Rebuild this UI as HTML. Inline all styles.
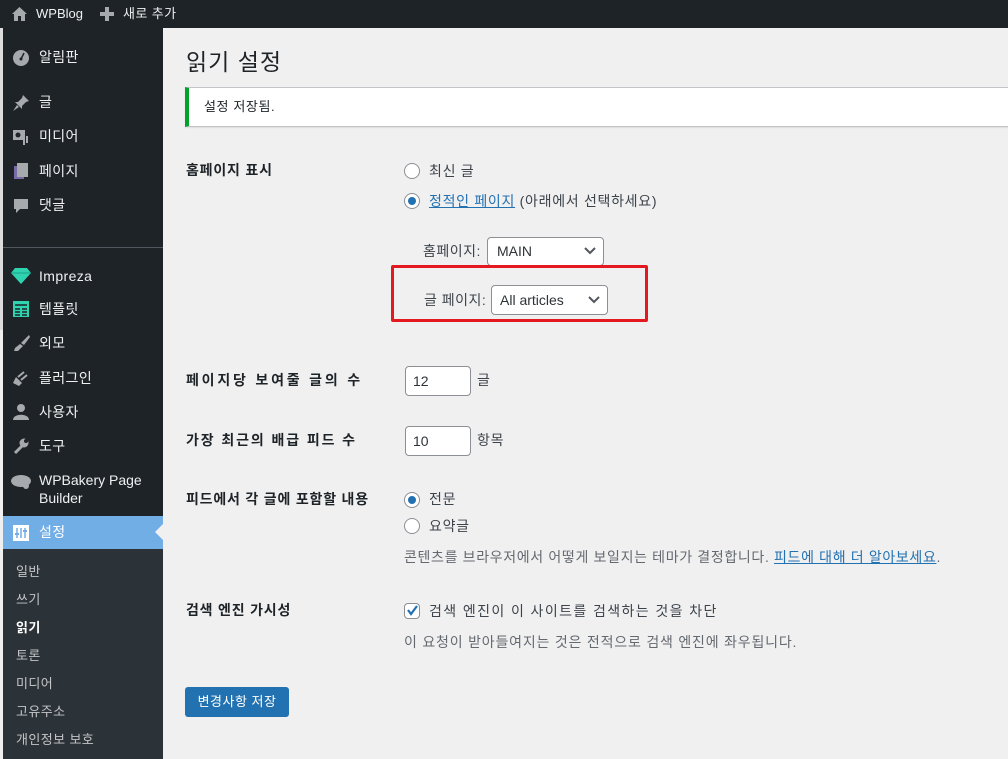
<!DOCTYPE html>
<html><head><meta charset="utf-8"><style>
*{margin:0;padding:0;box-sizing:border-box}
body{width:1008px;height:759px;overflow:hidden;background:#f0f0f1;font-family:"Liberation Sans","Noto Sans CJK KR",sans-serif;font-size:14px;color:#1d2327;position:relative}
.a{position:absolute;white-space:nowrap;line-height:20px}
#top{position:absolute;left:0;top:0;width:1008px;height:28px;background:#1d2327}
#side{position:absolute;left:3px;top:28px;width:160px;height:731px;background:#1d2327}
#strip{position:absolute;left:0;top:28px;width:3px;height:302px;background:#dcdcde}
.m{position:absolute;left:36px;color:#f0f0f1;line-height:20px;font-size:14px;letter-spacing:.4px}
.ic{position:absolute;left:9px;width:18px;height:18px}
.s{position:absolute;left:13px;color:#c3c4c7;font-size:13px;line-height:20px;letter-spacing:.4px}
.radio{position:absolute;width:16px;height:16px;border:1px solid #8c8f94;border-radius:50%;background:#fff}
.radio.on::after{content:"";position:absolute;left:3px;top:3px;width:8px;height:8px;border-radius:50%;background:#2271b1}
.box{position:absolute;background:#fff;border:1px solid #8c8f94;border-radius:4px}
.lbl{font-weight:600;font-size:14px}
</style></head><body>
<div id="top">
<svg style="position:absolute;left:11px;top:6px" width="17" height="16" viewBox="0 0 17 16"><path d="M8.5 1 L1 8 L3 8 L3 15 L7 15 L7 10 L10 10 L10 15 L14 15 L14 8 L16 8 Z" fill="#a7aaad"/></svg>
<div class="a" style="left:36px;top:4px;color:#f0f0f1;font-size:13px">WPBlog</div>
<svg style="position:absolute;left:100px;top:7px" width="14" height="14"><path d="M5 0h4v5h5v4h-5v5h-4v-5h-5v-4h5z" fill="#a7aaad"/></svg>
<div class="a" style="left:123px;top:4px;color:#f0f0f1;font-size:13px;letter-spacing:.4px">새로 추가</div>
</div>
<div id="strip"></div>
<div id="side">
<svg class="ic" style="top:20px" viewBox="0 0 18 18"><circle cx="9" cy="10" r="8" fill="#a7aaad"/><path d="M9 11 L12 5" stroke="#1d2327" stroke-width="1.5"/><circle cx="9" cy="11" r="1.5" fill="#1d2327"/></svg>
<div class="m" style="top:19px">알림판</div>
<svg class="ic" style="top:66px" viewBox="0 0 18 18"><path d="M11 1 L17 7 L14 8 L10 12 L10 15 L3 8 L6 8 L10 4 Z M5 11 L1 17 L7 13Z" fill="#a7aaad"/></svg>
<div class="m" style="top:64px">글</div>
<svg class="ic" style="top:100px" viewBox="0 0 18 18"><rect x="1" y="2" width="12" height="10" fill="#a7aaad"/><circle cx="6" cy="7" r="2.5" fill="#1d2327"/><path d="M12 9v8M15 8v7" stroke="#a7aaad" stroke-width="2"/></svg>
<div class="m" style="top:98px">미디어</div>
<svg class="ic" style="top:134px" viewBox="0 0 18 18"><rect x="2" y="4" width="10" height="13" fill="#7b6aa8"/><rect x="5" y="1" width="11" height="14" fill="#a7aaad"/></svg>
<div class="m" style="top:133px">페이지</div>
<svg class="ic" style="top:169px" viewBox="0 0 18 18"><path d="M2 2h14v10h-8l-4 4v-4h-2z" fill="#a7aaad"/></svg>
<div class="m" style="top:167px">댓글</div>
<div style="position:absolute;left:0;top:219px;width:160px;height:1px;background:#50575e"></div>
<svg class="ic" style="top:239px;width:22px;left:7px" viewBox="0 0 22 18"><path d="M1 6 L5 1 L17 1 L21 6 L11 17 Z" fill="#2fd3b0"/><path d="M1 6 H21" stroke="#1aa388"/></svg>
<div class="m" style="top:238px">Impreza</div>
<svg class="ic" style="top:272px" viewBox="0 0 18 18"><rect x="1" y="1" width="16" height="16" fill="#2fd3b0"/><path d="M3 5h12M3 9h5M10 9h5M3 12h5M10 12h5M3 15h5M10 15h5" stroke="#1d2327" stroke-width="1.5"/></svg>
<div class="m" style="top:271px">템플릿</div>
<svg class="ic" style="top:306px" viewBox="0 0 18 18"><path d="M17 1 L9 9 L12 11 L18 3Z M8 10 L11 12 L6 17 L2 17 L3 14Z" fill="#a7aaad"/></svg>
<div class="m" style="top:305px">외모</div>
<svg class="ic" style="top:341px" viewBox="0 0 18 18"><path d="M6 8 L12 3 M9 11 L15 6" stroke="#a7aaad" stroke-width="2"/><path d="M4 8 L10 14 L7 17 L1 14 Z" fill="#a7aaad"/></svg>
<div class="m" style="top:340px">플러그인</div>
<svg class="ic" style="top:375px" viewBox="0 0 18 18"><circle cx="9" cy="5" r="4" fill="#a7aaad"/><path d="M1 17 C1 10 17 10 17 17Z" fill="#a7aaad"/></svg>
<div class="m" style="top:374px">사용자</div>
<svg class="ic" style="top:409px" viewBox="0 0 18 18"><path d="M3 16 L10 9" stroke="#a7aaad" stroke-width="3"/><circle cx="12" cy="6" r="4.5" fill="#a7aaad"/><circle cx="14" cy="4" r="2" fill="#1d2327"/></svg>
<div class="m" style="top:408px">도구</div>
<svg class="ic" style="top:444px;width:22px;left:7px" viewBox="0 0 22 18"><ellipse cx="11" cy="9" rx="10" ry="6" fill="#a7aaad"/><circle cx="16" cy="14" r="3" fill="#a7aaad"/></svg>
<div class="m" style="top:443px;line-height:18px;letter-spacing:0">WPBakery Page<br>Builder</div>
<div style="position:absolute;left:0;top:488px;width:160px;height:33px;background:#72aee6"></div>
<div style="position:absolute;left:152px;top:496px;width:0;height:0;border-top:8px solid transparent;border-bottom:8px solid transparent;border-right:8px solid #f0f0f1"></div>
<svg class="ic" style="top:496px" viewBox="0 0 18 18"><rect x="1" y="1" width="16" height="16" fill="#fff"/><path d="M5 4v10M9 4v10M13 4v10" stroke="#72aee6" stroke-width="1.5"/><path d="M3 10h4M11 7h4" stroke="#72aee6" stroke-width="2"/></svg>
<div class="m" style="top:494px;color:#fff">설정</div>
<div style="position:absolute;left:0;top:521px;width:160px;height:210px;background:#2c3338"></div>
<div class="s" style="top:534px">일반</div>
<div class="s" style="top:562px">쓰기</div>
<div class="s" style="top:590px;color:#fff;font-weight:bold">읽기</div>
<div class="s" style="top:618px">토론</div>
<div class="s" style="top:646px">미디어</div>
<div class="s" style="top:674px">고유주소</div>
<div class="s" style="top:702px">개인정보 보호</div>
</div>

<div class="a" style="left:186px;top:46px;font-size:23px;line-height:32px;letter-spacing:1px">읽기 설정</div>
<div style="position:absolute;left:185px;top:87px;width:823px;height:40px;background:#fff;border-left:4px solid #00a32a;box-shadow:0 1px 1px rgba(0,0,0,.08);border-top:1px solid #c3c4c7;border-bottom:1px solid #c3c4c7"></div>
<div class="a" style="left:204px;top:97px;font-size:13px;letter-spacing:.6px">설정 저장됨.</div>

<div class="a lbl" style="left:186px;top:160px;letter-spacing:.8px">홈페이지 표시</div>
<div class="radio" style="left:404px;top:163px"></div>
<div class="a" style="left:429px;top:161px;color:#3c434a;letter-spacing:.7px">최신 글</div>
<div class="radio on" style="left:404px;top:193px"></div>
<div class="a" style="left:429px;top:191px;color:#3c434a;letter-spacing:.7px"><span style="color:#2271b1;text-decoration:underline">정적인 페이지</span> (아래에서 선택하세요)</div>

<div class="a" style="left:423px;top:241px;color:#3c434a;letter-spacing:.5px">홈페이지:</div>
<div class="box" style="left:487px;top:237px;width:117px;height:29px"></div>
<div class="a" style="left:497px;top:241px;color:#2c3338">MAIN</div>
<svg style="position:absolute;left:584px;top:247px" width="12" height="8"><path d="M1 1 L6 6 L11 1" stroke="#50575e" stroke-width="2" fill="none"/></svg>

<div style="position:absolute;left:391px;top:265px;width:257px;height:57px;border:3px solid #e3191f;border-radius:2px"></div>
<div class="a" style="left:424px;top:290px;color:#3c434a;letter-spacing:.5px">글 페이지:</div>
<div class="box" style="left:491px;top:285px;width:117px;height:30px"></div>
<div class="a" style="left:500px;top:290px;color:#2c3338">All articles</div>
<svg style="position:absolute;left:588px;top:296px" width="12" height="8"><path d="M1 1 L6 6 L11 1" stroke="#50575e" stroke-width="2" fill="none"/></svg>

<div class="a lbl" style="left:186px;top:370px;letter-spacing:2.8px">페이지당 보여줄 글의 수</div>
<div class="box" style="left:405px;top:366px;width:66px;height:30px"></div>
<div class="a" style="left:413px;top:371px;color:#2c3338">12</div>
<div class="a" style="left:477px;top:370px;color:#3c434a">글</div>

<div class="a lbl" style="left:186px;top:430px;letter-spacing:1.9px">가장 최근의 배급 피드 수</div>
<div class="box" style="left:405px;top:426px;width:66px;height:30px"></div>
<div class="a" style="left:413px;top:431px;color:#2c3338">10</div>
<div class="a" style="left:477px;top:430px;color:#3c434a;letter-spacing:.7px">항목</div>

<div class="a lbl" style="left:186px;top:489px;letter-spacing:.8px">피드에서 각 글에 포함할 내용</div>
<div class="radio on" style="left:404px;top:492px"></div>
<div class="a" style="left:429px;top:489px;color:#3c434a;letter-spacing:.7px">전문</div>
<div class="radio" style="left:404px;top:518px"></div>
<div class="a" style="left:429px;top:516px;color:#3c434a;letter-spacing:.7px">요약글</div>
<div class="a" style="left:404px;top:547px;color:#646970;letter-spacing:.65px">콘텐츠를 브라우저에서 어떻게 보일지는 테마가 결정합니다. <span style="color:#2271b1;text-decoration:underline">피드에 대해 더 알아보세요</span>.</div>

<div class="a lbl" style="left:186px;top:600px;letter-spacing:.8px">검색 엔진 가시성</div>
<div class="box" style="left:404px;top:603px;width:16px;height:16px"></div>
<svg style="position:absolute;left:405px;top:603px" width="15" height="15"><path d="M3 7 L6 11 L12 3" stroke="#2271b1" stroke-width="2.2" fill="none"/></svg>
<div class="a" style="left:429px;top:601px;color:#3c434a;letter-spacing:1.4px">검색 엔진이 이 사이트를 검색하는 것을 차단</div>
<div class="a" style="left:404px;top:632px;color:#646970;letter-spacing:.8px">이 요청이 받아들여지는 것은 전적으로 검색 엔진에 좌우됩니다.</div>

<div style="position:absolute;left:185px;top:687px;width:104px;height:30px;background:#2271b1;border-radius:3px"></div>
<div class="a" style="left:185px;top:692px;width:104px;text-align:center;color:#fff;font-size:13px;letter-spacing:.5px">변경사항 저장</div>
</body></html>
